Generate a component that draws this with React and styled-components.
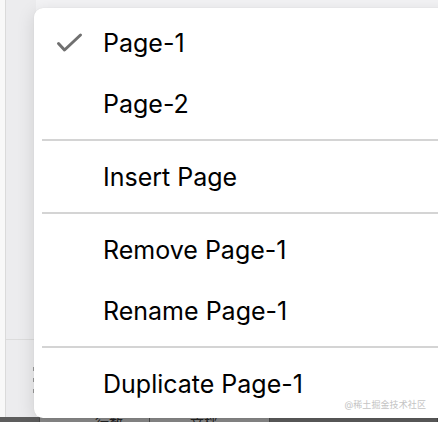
import React from "react";
import styled, { createGlobalStyle } from "styled-components";

const GlobalStyle = createGlobalStyle`
  html, body {
    margin: 0;
    padding: 0;
    background: #f1f1f3;
  }
  * { box-sizing: border-box; }
`;

const pages = ["Page-1", "Page-2"];
const current = "Page-1";

const Screen = styled.div`
  position: relative;
  width: 438px;
  height: 422px;
  overflow: hidden;
  display: flex;
  flex-direction: column;
  background: #f1f1f3;
  font-family: Inter, "Noto Sans", "Noto Sans CJK SC", sans-serif;
`;

const Workspace = styled.div`
  flex: 1;
  display: flex;
`;

const Rail = styled.div`
  width: 6px;
  background: #f8f8f8;
  border-right: 1px solid #dadada;
`;

const SidePanel = styled.div`
  width: 30px;
  display: flex;
  flex-direction: column;
  background: #ececee;
`;

const PanelTop = styled.div`
  height: 340px;
  border-bottom: 1px solid #dcdcdc;
`;

const Handle = styled.div`
  display: flex;
  flex-direction: column;
  align-items: flex-end;
  gap: 7px;
  padding: 27px 0 0;
`;

const Dot = styled.span`
  width: 3px;
  height: 4px;
  background: #9a9a9a;
`;

const Canvas = styled.div`
  flex: 1;
  background: #f3f3f5;
`;

const StatusBar = styled.div`
  height: 5px;
  display: flex;
  background: #5d5d5d;
  overflow: hidden;
`;

const StatusTab = styled.div`
  width: ${(p) => p.width}px;
  background: ${(p) => (p.light ? "#8a8a8a" : "#5d5d5d")};
  border-right: 1px solid #4a4a4a;
  color: #222;
  font-size: 14px;
  line-height: 14px;
  padding-left: ${(p) => p.pad}px;
  margin-top: -1px;
`;

const Menu = styled.div`
  position: absolute;
  left: 34px;
  top: 8px;
  width: 430px;
  padding: 4px 0;
  background: #ffffff;
  border-radius: 9px;
  box-shadow: 0 0 1px rgba(0, 0, 0, 0.12), 0 4px 18px rgba(0, 0, 0, 0.13);
`;

const Item = styled.div`
  position: relative;
  height: 61px;
  padding: 16px 0 0 69px;
  font-size: 25px;
  line-height: 30px;
  color: #000000;
`;

const Check = styled.svg`
  position: absolute;
  left: 22px;
  top: 20px;
`;

const Separator = styled.div`
  height: 2px;
  margin: 5px 0 5px 8px;
  background: #d4d4d4;
`;

const Watermark = styled.div`
  position: absolute;
  right: 12px;
  bottom: 11px;
  font-size: 9px;
  color: #c4c4c4;
  letter-spacing: 0.1px;
`;

function MenuItem({ children, checked }) {
  return (
    <Item>
      {checked && (
        <Check width="28" height="22" viewBox="0 0 28 22">
          <path
            d="M2.5 11.5 L8.5 18 L24.5 3"
            fill="none"
            stroke="#707070"
            strokeWidth="3"
            strokeLinecap="round"
            strokeLinejoin="round"
          />
        </Check>
      )}
      {children}
    </Item>
  );
}

export default function App() {
  return (
    <>
      <GlobalStyle />
      <Screen>
        <Workspace>
          <Rail />
          <SidePanel>
            <PanelTop />
            <Handle>
              <Dot />
              <Dot />
              <Dot />
            </Handle>
          </SidePanel>
          <Canvas />
        </Workspace>
        <StatusBar>
          <StatusTab width={40} />
          <StatusTab width={110} light pad={55}>
            行数
          </StatusTab>
          <StatusTab width={120} light pad={40}>
            文档
          </StatusTab>
          <StatusTab width={168} />
        </StatusBar>

        <Menu>
          {pages.map((p) => (
            <MenuItem key={p} checked={p === current}>
              {p}
            </MenuItem>
          ))}
          <Separator />
          <MenuItem>Insert Page</MenuItem>
          <Separator />
          <MenuItem>Remove {current}</MenuItem>
          <MenuItem>Rename {current}</MenuItem>
          <Separator />
          <MenuItem>Duplicate {current}</MenuItem>
        </Menu>
        <Watermark>@稀土掘金技术社区</Watermark>
      </Screen>
    </>
  );
}
